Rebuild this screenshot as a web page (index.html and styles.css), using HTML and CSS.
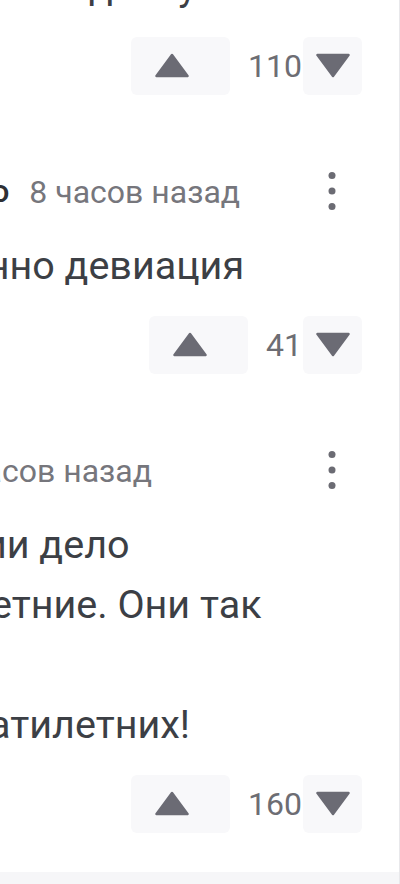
FILE: index.html
```html
<!DOCTYPE html>
<html lang="ru">
<head>
<meta charset="utf-8">
<title>Комментарии</title>
<link rel="stylesheet" href="styles.css">
</head>
<body>
<div class="page">
  <main class="feed">
    <article class="comment comment-first">
      <p class="comment-text">он обнял свою дочку</p>
      <div class="votes">
        <button class="vote vote-up" aria-label="Нравится"><svg class="tri" width="34" height="25" viewBox="0 0 34 25"><path d="M17 2 L32.5 23 L1.5 23 Z"/></svg></button>
        <span class="score">110</span>
        <button class="vote vote-down" aria-label="Не нравится"><svg class="tri" width="34" height="25" viewBox="0 0 34 25"><path d="M1.5 2 L32.5 2 L17 23 Z"/></svg></button>
      </div>
    </article>

    <article class="comment">
      <header class="comment-head">
        <span class="author">Сергей Бойко</span>
        <span class="time">8 часов назад</span>
        <button class="more" aria-label="Ещё"><svg width="8" height="40" viewBox="0 0 8 40"><circle cx="4" cy="4.5" r="3.5"/><circle cx="4" cy="20" r="3.5"/><circle cx="4" cy="35.5" r="3.5"/></svg></button>
      </header>
      <p class="comment-text">Определённо девиация</p>
      <div class="votes">
        <button class="vote vote-up" aria-label="Нравится"><svg class="tri" width="34" height="25" viewBox="0 0 34 25"><path d="M17 2 L32.5 23 L1.5 23 Z"/></svg></button>
        <span class="score">41</span>
        <button class="vote vote-down" aria-label="Не нравится"><svg class="tri" width="34" height="25" viewBox="0 0 34 25"><path d="M1.5 2 L32.5 2 L17 23 Z"/></svg></button>
      </div>
    </article>

    <article class="comment">
      <header class="comment-head">
        <span class="author">Михаил</span>
        <span class="time">9 часов назад</span>
        <button class="more" aria-label="Ещё"><svg width="8" height="40" viewBox="0 0 8 40"><circle cx="4" cy="4.5" r="3.5"/><circle cx="4" cy="20" r="3.5"/><circle cx="4" cy="35.5" r="3.5"/></svg></button>
      </header>
      <p class="comment-text">Уж полиции дело<br>Им малолетние. Они так<br>зовут<br>шестнадцатилетних!</p>
      <div class="votes">
        <button class="vote vote-up" aria-label="Нравится"><svg class="tri" width="34" height="25" viewBox="0 0 34 25"><path d="M17 2 L32.5 23 L1.5 23 Z"/></svg></button>
        <span class="score">160</span>
        <button class="vote vote-down" aria-label="Не нравится"><svg class="tri" width="34" height="25" viewBox="0 0 34 25"><path d="M1.5 2 L32.5 2 L17 23 Z"/></svg></button>
      </div>
    </article>
  </main>
  <div class="footer-strip"></div>
</div>
</body>
</html>
```

FILE: styles.css
```css
html, body {
  margin: 0;
  padding: 0;
  background: #ffffff;
}

body {
  font-family: Roboto, "Noto Sans", "Liberation Sans", sans-serif;
  overflow: hidden;
}

.page {
  width: 400px;
  height: 884px;
  box-sizing: border-box;
  border-right: 1px solid #e8e8eb;
  display: flex;
  flex-direction: column;
  overflow: hidden;
  background: #ffffff;
}

.feed {
  flex: 1;
  margin-left: -195px;
}

.comment + .comment {
  margin-top: 72px;
}

.comment-head {
  display: flex;
  align-items: center;
  height: 48px;
  padding-right: 47px;
}

.author {
  font-size: 32px;
  line-height: 40px;
  font-weight: 500;
  color: #2f3034;
  white-space: nowrap;
}

.time {
  margin-left: 20px;
  padding-top: 2px;
  font-size: 32px;
  line-height: 40px;
  color: #76767c;
  white-space: nowrap;
}

.more {
  margin-left: auto;
  width: 40px;
  height: 48px;
  padding: 0;
  border: 0;
  background: none;
  display: flex;
  align-items: center;
  justify-content: center;
  fill: #6b6b73;
}

.comment-text {
  margin: 21px 0 0;
  font-size: 39.5px;
  line-height: 60px;
  color: #3c3f45;
  white-space: nowrap;
}

.comment-first .comment-text {
  margin-top: -43.5px;
}

.votes {
  display: flex;
  justify-content: flex-end;
  align-items: center;
  margin-top: 20px;
  padding-right: 37px;
}

.vote {
  box-sizing: border-box;
  height: 58px;
  padding: 0;
  border: 0;
  border-radius: 6px;
  background: #f8f8fa;
  display: flex;
  align-items: center;
}

.vote-up {
  width: 99px;
  padding-left: 24px;
}

.vote-down {
  width: 59px;
  justify-content: center;
}

.tri path {
  fill: #6b6b74;
  stroke: #6b6b74;
  stroke-width: 2.5;
  stroke-linejoin: round;
}

.score {
  margin-left: 18px;
  margin-right: 1px;
  font-size: 32px;
  line-height: 58px;
  color: #6d6d73;
}

.footer-strip {
  height: 12px;
  background: #f6f6f8;
}
```
